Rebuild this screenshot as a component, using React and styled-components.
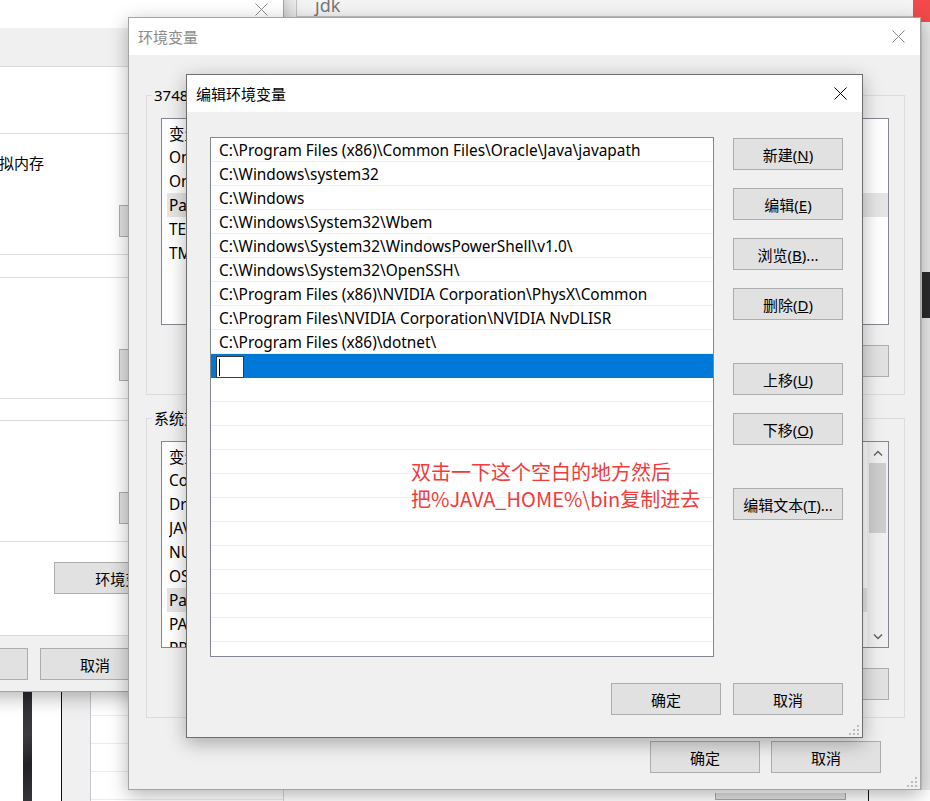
import React from "react";
import styled, { createGlobalStyle } from "styled-components";

const UI = `"Noto Sans", "Noto Sans CJK SC", sans-serif`;

const GlobalStyle = createGlobalStyle`
  html, body {
    margin: 0;
    padding: 0;
    background: #fff;
  }
  body {
    font-family: ${UI};
    color: #000;
  }
`;

const paths = [
  "C:\\Program Files (x86)\\Common Files\\Oracle\\Java\\javapath",
  "C:\\Windows\\system32",
  "C:\\Windows",
  "C:\\Windows\\System32\\Wbem",
  "C:\\Windows\\System32\\WindowsPowerShell\\v1.0\\",
  "C:\\Windows\\System32\\OpenSSH\\",
  "C:\\Program Files (x86)\\NVIDIA Corporation\\PhysX\\Common",
  "C:\\Program Files\\NVIDIA Corporation\\NVIDIA NvDLISR",
  "C:\\Program Files (x86)\\dotnet\\",
];

const userVars = [
  ["OneDrive", "C:\\Users\\3748\\OneDrive"],
  ["OneDriveConsumer", "C:\\Users\\3748\\OneDrive"],
  ["Path", "C:\\Users\\3748\\AppData\\Local\\Microsoft\\WindowsApps;"],
  ["TEMP", "C:\\Users\\3748\\AppData\\Local\\Temp"],
  ["TMP", "C:\\Users\\3748\\AppData\\Local\\Temp"],
];

const sysVars = [
  ["ComSpec", "C:\\Windows\\system32\\cmd.exe"],
  ["DriverData", "C:\\Windows\\System32\\Drivers\\DriverData"],
  ["JAVA_HOME", "C:\\Program Files\\Java\\jdk1.8.0_201"],
  ["NUMBER_OF_PROCESSORS", "12"],
  ["OS", "Windows_NT"],
  ["Path", "C:\\Program Files (x86)\\Common Files\\Oracle\\Java\\javapath;"],
  ["PATHEXT", ".COM;.EXE;.BAT;.CMD;.VBS;.VBE;.JS;.JSE;.WSF;.WSH;.MSC"],
  ["PROCESSOR_ARCHITECTURE", "AMD64"],
];

const XIcon = ({ color }) => (
  <svg width="13" height="13" viewBox="0 0 13 13">
    <path d="M0.5 0.5L12.5 12.5M12.5 0.5L0.5 12.5" stroke={color} strokeWidth="1" fill="none" />
  </svg>
);

const Grip = () => (
  <S.GripBox>
    <svg width="10" height="10" viewBox="0 0 10 10" fill="#bdbdbd">
      <rect x="8" y="0" width="2" height="2" />
      <rect x="4" y="4" width="2" height="2" />
      <rect x="8" y="4" width="2" height="2" />
      <rect x="0" y="8" width="2" height="2" />
      <rect x="4" y="8" width="2" height="2" />
      <rect x="8" y="8" width="2" height="2" />
    </svg>
  </S.GripBox>
);

const Chevron = ({ up }) => (
  <svg width="10" height="6" viewBox="0 0 10 6">
    <path d={up ? "M1 5.5L5 1.5L9 5.5" : "M1 0.5L5 4.5L9 0.5"} stroke="#606060" strokeWidth="1.4" fill="none" />
  </svg>
);

const VarTable = ({ rows, selected, scroll }) => (
  <S.VarList>
    <S.VarBody>
      <S.VarHeader>
        <S.NameCell>变量</S.NameCell>
        <S.ValueCell>值</S.ValueCell>
      </S.VarHeader>
      {rows.map(([k, v]) => (
        <S.VarRow key={k} $selected={k === selected}>
          <S.NameCell>{k}</S.NameCell>
          <S.ValueCell>{v}</S.ValueCell>
        </S.VarRow>
      ))}
    </S.VarBody>
    {scroll && (
      <S.ScrollBar>
        <S.ScrollArrow>
          <Chevron up />
        </S.ScrollArrow>
        <S.ScrollThumb />
        <S.ScrollArrow $bottom>
          <Chevron />
        </S.ScrollArrow>
      </S.ScrollBar>
    )}
  </S.VarList>
);

const App = () => {
  const emptyRows = Array.from({ length: 12 });
  return (
    <>
      <GlobalStyle />
      <S.Desktop>
        {/* explorer window behind everything */}
        <S.BackWindow>
          <S.BackTop>
            <S.SearchField>jdk</S.SearchField>
            <S.RedClose />
          </S.BackTop>
          <S.BackBody>
            <S.BackFill />
            <S.SideStrip>
              <S.DarkBlock />
            </S.SideStrip>
          </S.BackBody>
          <S.BackBottom>
            <S.BackButton />
            <S.BlackLine />
          </S.BackBottom>
        </S.BackWindow>

        {/* app strip at bottom left */}
        <S.BackApp>
          <S.AppWhite $w={23} />
          <S.AppDark />
          <S.AppWhite $w={29} />
          <S.AppRule $color="#111" />
          <S.AppGray />
          <S.AppRule $color="#c4c4cc" />
          <S.AppRows>
            <S.AppRow />
            <S.AppRow />
            <S.AppRow />
            <S.AppRow />
          </S.AppRows>
        </S.BackApp>

        {/* 系统属性 */}
        <S.Win $x={-300} $y={-10} $w={584} $h={702}>
          <S.TitleBar>
            <S.TitleText>系统属性</S.TitleText>
            <S.CloseBox>
              <XIcon color="#8a8a8a" />
            </S.CloseBox>
          </S.TitleBar>
          <S.TabStrip />
          <S.TabPage>
            <S.SysGroup>
              <S.GroupText>视觉效果，处理器计划，内存使用，以及虚拟内存</S.GroupText>
              <S.GroupButtons>
                <S.Button>设置(S)...</S.Button>
              </S.GroupButtons>
            </S.SysGroup>
            <S.SysGroup $gap={22}>
              <S.GroupText>与登录帐户相关的桌面设置</S.GroupText>
              <S.GroupButtons>
                <S.Button>设置(E)...</S.Button>
              </S.GroupButtons>
            </S.SysGroup>
            <S.SysGroup $gap={21}>
              <S.GroupText>系统启动、系统故障和调试信息</S.GroupText>
              <S.GroupButtons>
                <S.Button>设置(T)...</S.Button>
              </S.GroupButtons>
            </S.SysGroup>
            <S.EnvButtonRow>
              <S.Button $w={175}>
                环境变量(<u>N</u>)...
              </S.Button>
            </S.EnvButtonRow>
          </S.TabPage>
          <S.DialogButtons $pad={11} $gap={12} $top={12}>
            <S.Button>确定</S.Button>
            <S.Button>取消</S.Button>
            <S.Button>应用(A)</S.Button>
          </S.DialogButtons>
        </S.Win>

        {/* 环境变量 */}
        <S.Win $x={128} $y={17} $w={793} $h={773}>
          <S.TitleBar>
            <S.TitleText>环境变量</S.TitleText>
            <S.CloseBox>
              <XIcon color="#8a8a8a" />
            </S.CloseBox>
          </S.TitleBar>
          <S.EnvBody>
            <S.Group $top={30}>
              <S.Legend>3748 的用户变量(U)</S.Legend>
              <VarTable rows={userVars} selected="Path" />
              <S.VarButtons>
                <S.Button>新建(N)...</S.Button>
                <S.Button>编辑(E)...</S.Button>
                <S.Button>删除(D)</S.Button>
              </S.VarButtons>
            </S.Group>
            <S.Group $top={13}>
              <S.Legend>系统变量(S)</S.Legend>
              <VarTable rows={sysVars} selected="Path" scroll />
              <S.VarButtons>
                <S.Button>新建(W)...</S.Button>
                <S.Button>编辑(I)...</S.Button>
                <S.Button>删除(L)</S.Button>
              </S.VarButtons>
            </S.Group>
            <S.DialogButtons $pad={24} $gap={11} $top={23}>
              <S.Button>确定</S.Button>
              <S.Button>取消</S.Button>
            </S.DialogButtons>
          </S.EnvBody>
          <Grip />
        </S.Win>

        {/* 编辑环境变量 */}
        <S.Win $x={186} $y={74} $w={677} $h={664} $active>
          <S.TitleBar $active>
            <S.TitleText>编辑环境变量</S.TitleText>
            <S.CloseBox>
              <XIcon color="#000" />
            </S.CloseBox>
          </S.TitleBar>
          <S.EditBody>
            <S.EditMain>
              <S.PathList>
                {paths.map((p) => (
                  <S.PathRow key={p}>{p}</S.PathRow>
                ))}
                <S.PathRow $selected>
                  <S.EditBox>
                    <S.Caret />
                  </S.EditBox>
                </S.PathRow>
                {emptyRows.map((_, i) => (
                  <S.PathRow key={i} />
                ))}
                <S.Note>
                  双击一下这个空白的地方然后
                  <br />
                  把%JAVA_HOME%\bin复制进去
                </S.Note>
              </S.PathList>
              <S.ButtonColumn>
                <S.Button>
                  新建(<u>N</u>)
                </S.Button>
                <S.Button $mt={18}>
                  编辑(<u>E</u>)
                </S.Button>
                <S.Button $mt={18}>
                  浏览(<u>B</u>)...
                </S.Button>
                <S.Button $mt={18}>
                  删除(<u>D</u>)
                </S.Button>
                <S.Button $mt={43}>
                  上移(<u>U</u>)
                </S.Button>
                <S.Button $mt={18}>
                  下移(<u>O</u>)
                </S.Button>
                <S.Button $mt={43}>
                  编辑文本(<u>T</u>)...
                </S.Button>
              </S.ButtonColumn>
            </S.EditMain>
            <S.DialogButtons $pad={0} $gap={12} $top={26}>
              <S.Button>确定</S.Button>
              <S.Button>取消</S.Button>
            </S.DialogButtons>
          </S.EditBody>
          <Grip />
        </S.Win>
      </S.Desktop>
    </>
  );
};

export default App;

const S = {
  Desktop: styled.div`
    position: relative;
    width: 930px;
    height: 801px;
    overflow: hidden;
    background: #fff;
    font-family: ${UI};
  `,
  BackWindow: styled.div`
    position: absolute;
    left: 280px;
    top: 0;
    width: 650px;
    height: 801px;
    display: flex;
    flex-direction: column;
    background: #f0f0f0;
    border-left: 4px solid #d6d6d6;
    box-sizing: border-box;
  `,
  BackTop: styled.div`
    display: flex;
    align-items: flex-start;
    height: 22px;
    padding-left: 12px;
  `,
  SearchField: styled.div`
    flex: 1;
    height: 17px;
    box-sizing: border-box;
    border-left: 1px solid #c4c4c4;
    border-bottom: 1px solid #c4c4c4;
    background: #f4f4f4;
    padding-left: 18px;
    font-size: 18px;
    line-height: 10px;
    color: #777;
    overflow: hidden;
  `,
  RedClose: styled.div`
    width: 17px;
    height: 22px;
    background: #f24a4a;
  `,
  BackBody: styled.div`
    flex: 1;
    display: flex;
  `,
  BackFill: styled.div`
    flex: 1;
  `,
  SideStrip: styled.div`
    width: 9px;
    background: #e8e8e8;
    border-left: 1px solid #d0d0d0;
    box-sizing: border-box;
    padding-top: 250px;
  `,
  DarkBlock: styled.div`
    height: 46px;
    background: #2b2b2d;
  `,
  BackBottom: styled.div`
    height: 11px;
    display: flex;
    padding-left: 431px;
    background: #fff;
  `,
  BackButton: styled.div`
    width: 131px;
    height: 7px;
    margin-top: 3px;
    border: 1px solid #a8a8a8;
    border-top: none;
    background: #e1e1e1;
    box-sizing: border-box;
  `,
  BlackLine: styled.div`
    width: 1px;
    margin-left: 22px;
    background: #111;
  `,
  BackApp: styled.div`
    position: absolute;
    left: 0;
    top: 680px;
    width: 283px;
    height: 121px;
    display: flex;
    background: #fff;
  `,
  AppWhite: styled.div`
    width: ${(p) => p.$w}px;
    background: #fff;
  `,
  AppDark: styled.div`
    width: 9px;
    background: linear-gradient(160deg, #26262a 0%, #3a3a40 45%, #222226 70%, #36363b 100%);
  `,
  AppRule: styled.div`
    width: 1px;
    background: ${(p) => p.$color};
  `,
  AppGray: styled.div`
    width: 28px;
    background: #f0f0f0;
  `,
  AppRows: styled.div`
    flex: 1;
    padding-top: 8px;
  `,
  AppRow: styled.div`
    height: 28px;
    border-bottom: 1px solid #ececec;
    box-sizing: border-box;
  `,
  Win: styled.div`
    position: absolute;
    left: ${(p) => p.$x}px;
    top: ${(p) => p.$y}px;
    width: ${(p) => p.$w}px;
    height: ${(p) => p.$h}px;
    box-sizing: border-box;
    display: flex;
    flex-direction: column;
    background: #f0f0f0;
    border: 1px solid ${(p) => (p.$active ? "#6e6e6e" : "#a4a4a4")};
    box-shadow: 0 5px 18px rgba(0, 0, 0, 0.3);
  `,
  TitleBar: styled.div`
    flex: none;
    height: 37px;
    display: flex;
    align-items: center;
    padding-left: 9px;
    background: #fff;
    font-size: 15px;
    color: ${(p) => (p.$active ? "#000" : "#8c8c8c")};
  `,
  TitleText: styled.span`
    flex: 1;
    white-space: nowrap;
  `,
  CloseBox: styled.div`
    width: 44px;
    height: 100%;
    display: flex;
    align-items: center;
    justify-content: center;
  `,
  TabStrip: styled.div`
    flex: none;
    height: 38px;
    background: #f0f0f0;
  `,
  TabPage: styled.div`
    flex: none;
    height: 570px;
    box-sizing: border-box;
    background: #fff;
    border-top: 1px solid #dadada;
    border-bottom: 1px solid #dadada;
    padding-top: 66px;
  `,
  SysGroup: styled.div`
    width: 524px;
    height: 122px;
    margin: ${(p) => p.$gap || 0}px 0 0 14px;
    box-sizing: border-box;
    border: 1px solid #dcdcdc;
    padding: 19px 9px 17px 0;
    display: flex;
    flex-direction: column;
    justify-content: space-between;
  `,
  GroupText: styled.div`
    margin-left: -2px;
    font-size: 15px;
    line-height: 20px;
    white-space: nowrap;
  `,
  GroupButtons: styled.div`
    display: flex;
    justify-content: flex-end;
  `,
  EnvButtonRow: styled.div`
    width: 524px;
    margin: 20px 0 0 14px;
    padding-right: 10px;
    box-sizing: border-box;
    display: flex;
    justify-content: flex-end;
  `,
  DialogButtons: styled.div`
    display: flex;
    justify-content: flex-end;
    gap: ${(p) => p.$gap}px;
    margin-top: ${(p) => p.$top}px;
    padding-right: ${(p) => p.$pad}px;
  `,
  VarButtons: styled.div`
    display: flex;
    justify-content: flex-end;
    gap: 10px;
    margin-top: 20px;
  `,
  Button: styled.button`
    flex: none;
    box-sizing: border-box;
    width: ${(p) => p.$w || 110}px;
    height: 32px;
    margin-top: ${(p) => p.$mt || 0}px;
    padding: 0;
    border: 1px solid #adadad;
    border-radius: 0;
    background: #e1e1e1;
    font-family: ${UI};
    font-size: 15px;
    color: #000;
    white-space: nowrap;
    overflow: hidden;
  `,
  EnvBody: styled.div`
    flex: 1;
    display: flex;
    flex-direction: column;
    padding: 0 15px 0 17px;
  `,
  Group: styled.fieldset`
    margin: ${(p) => p.$top}px 0 0 0;
    padding: 13px 15px 17px 14px;
    border: 1px solid #dcdcdc;
    min-width: 0;
  `,
  Legend: styled.legend`
    margin-left: -9px;
    padding: 0 2px;
    font-size: 15px;
    line-height: 20px;
    white-space: nowrap;
  `,
  VarList: styled.div`
    height: 207px;
    box-sizing: border-box;
    border: 1px solid #828790;
    background: #fff;
    display: flex;
    overflow: hidden;
  `,
  VarBody: styled.div`
    flex: 1;
    padding-top: 2px;
    overflow: hidden;
  `,
  VarHeader: styled.div`
    height: 24px;
    display: flex;
    align-items: center;
    padding-left: 7px;
    font-size: 15.4px;
  `,
  VarRow: styled.div`
    height: 24px;
    display: flex;
    align-items: center;
    margin-left: 5px;
    padding-left: 2px;
    font-size: 15.4px;
    white-space: nowrap;
    background: ${(p) => (p.$selected ? "#e5e5e5" : "transparent")};
  `,
  NameCell: styled.span`
    width: 200px;
    flex: none;
    overflow: hidden;
  `,
  ValueCell: styled.span`
    flex: 1;
    overflow: hidden;
  `,
  ScrollBar: styled.div`
    width: 21px;
    display: flex;
    flex-direction: column;
    background: #f0f0f0;
  `,
  ScrollArrow: styled.div`
    height: 21px;
    display: flex;
    align-items: center;
    justify-content: center;
    margin-top: ${(p) => (p.$bottom ? "auto" : "0")};
  `,
  ScrollThumb: styled.div`
    height: 70px;
    margin: 0 2px;
    background: #cdcdcd;
  `,
  EditBody: styled.div`
    flex: 1;
    display: flex;
    flex-direction: column;
    padding: 25px 19px 0 23px;
  `,
  EditMain: styled.div`
    display: flex;
    gap: 19px;
  `,
  PathList: styled.div`
    position: relative;
    width: 504px;
    height: 520px;
    flex: none;
    box-sizing: border-box;
    border: 1px solid #828790;
    background: #fff;
    overflow: hidden;
  `,
  PathRow: styled.div`
    height: 24px;
    box-sizing: border-box;
    display: flex;
    align-items: ${(p) => (p.$selected ? "flex-end" : "center")};
    padding: ${(p) => (p.$selected ? "0 0 0 5px" : "1px 0 0 8px")};
    border-bottom: 1px solid ${(p) => (p.$selected ? "#0078d7" : "#f0f0f0")};
    background: ${(p) => (p.$selected ? "#0078d7" : "transparent")};
    font-size: 15.4px;
    white-space: nowrap;
  `,
  EditBox: styled.div`
    width: 28px;
    height: 22px;
    margin-bottom: -1px;
    box-sizing: border-box;
    border: 1px solid #3c3c3c;
    background: #fff;
    padding: 2px 0 0 2px;
  `,
  Caret: styled.div`
    width: 1px;
    height: 17px;
    background: #000;
  `,
  Note: styled.div`
    position: absolute;
    left: 200px;
    top: 320px;
    font-family: "Noto Sans CJK SC", "Noto Sans", sans-serif;
    font-size: 20px;
    line-height: 27px;
    color: #f33b3b;
    white-space: nowrap;
  `,
  ButtonColumn: styled.div`
    display: flex;
    flex-direction: column;
    padding-top: 1px;
  `,
  GripBox: styled.div`
    position: absolute;
    right: 3px;
    bottom: 2px;
    width: 10px;
    height: 10px;
    display: flex;
  `,
};
